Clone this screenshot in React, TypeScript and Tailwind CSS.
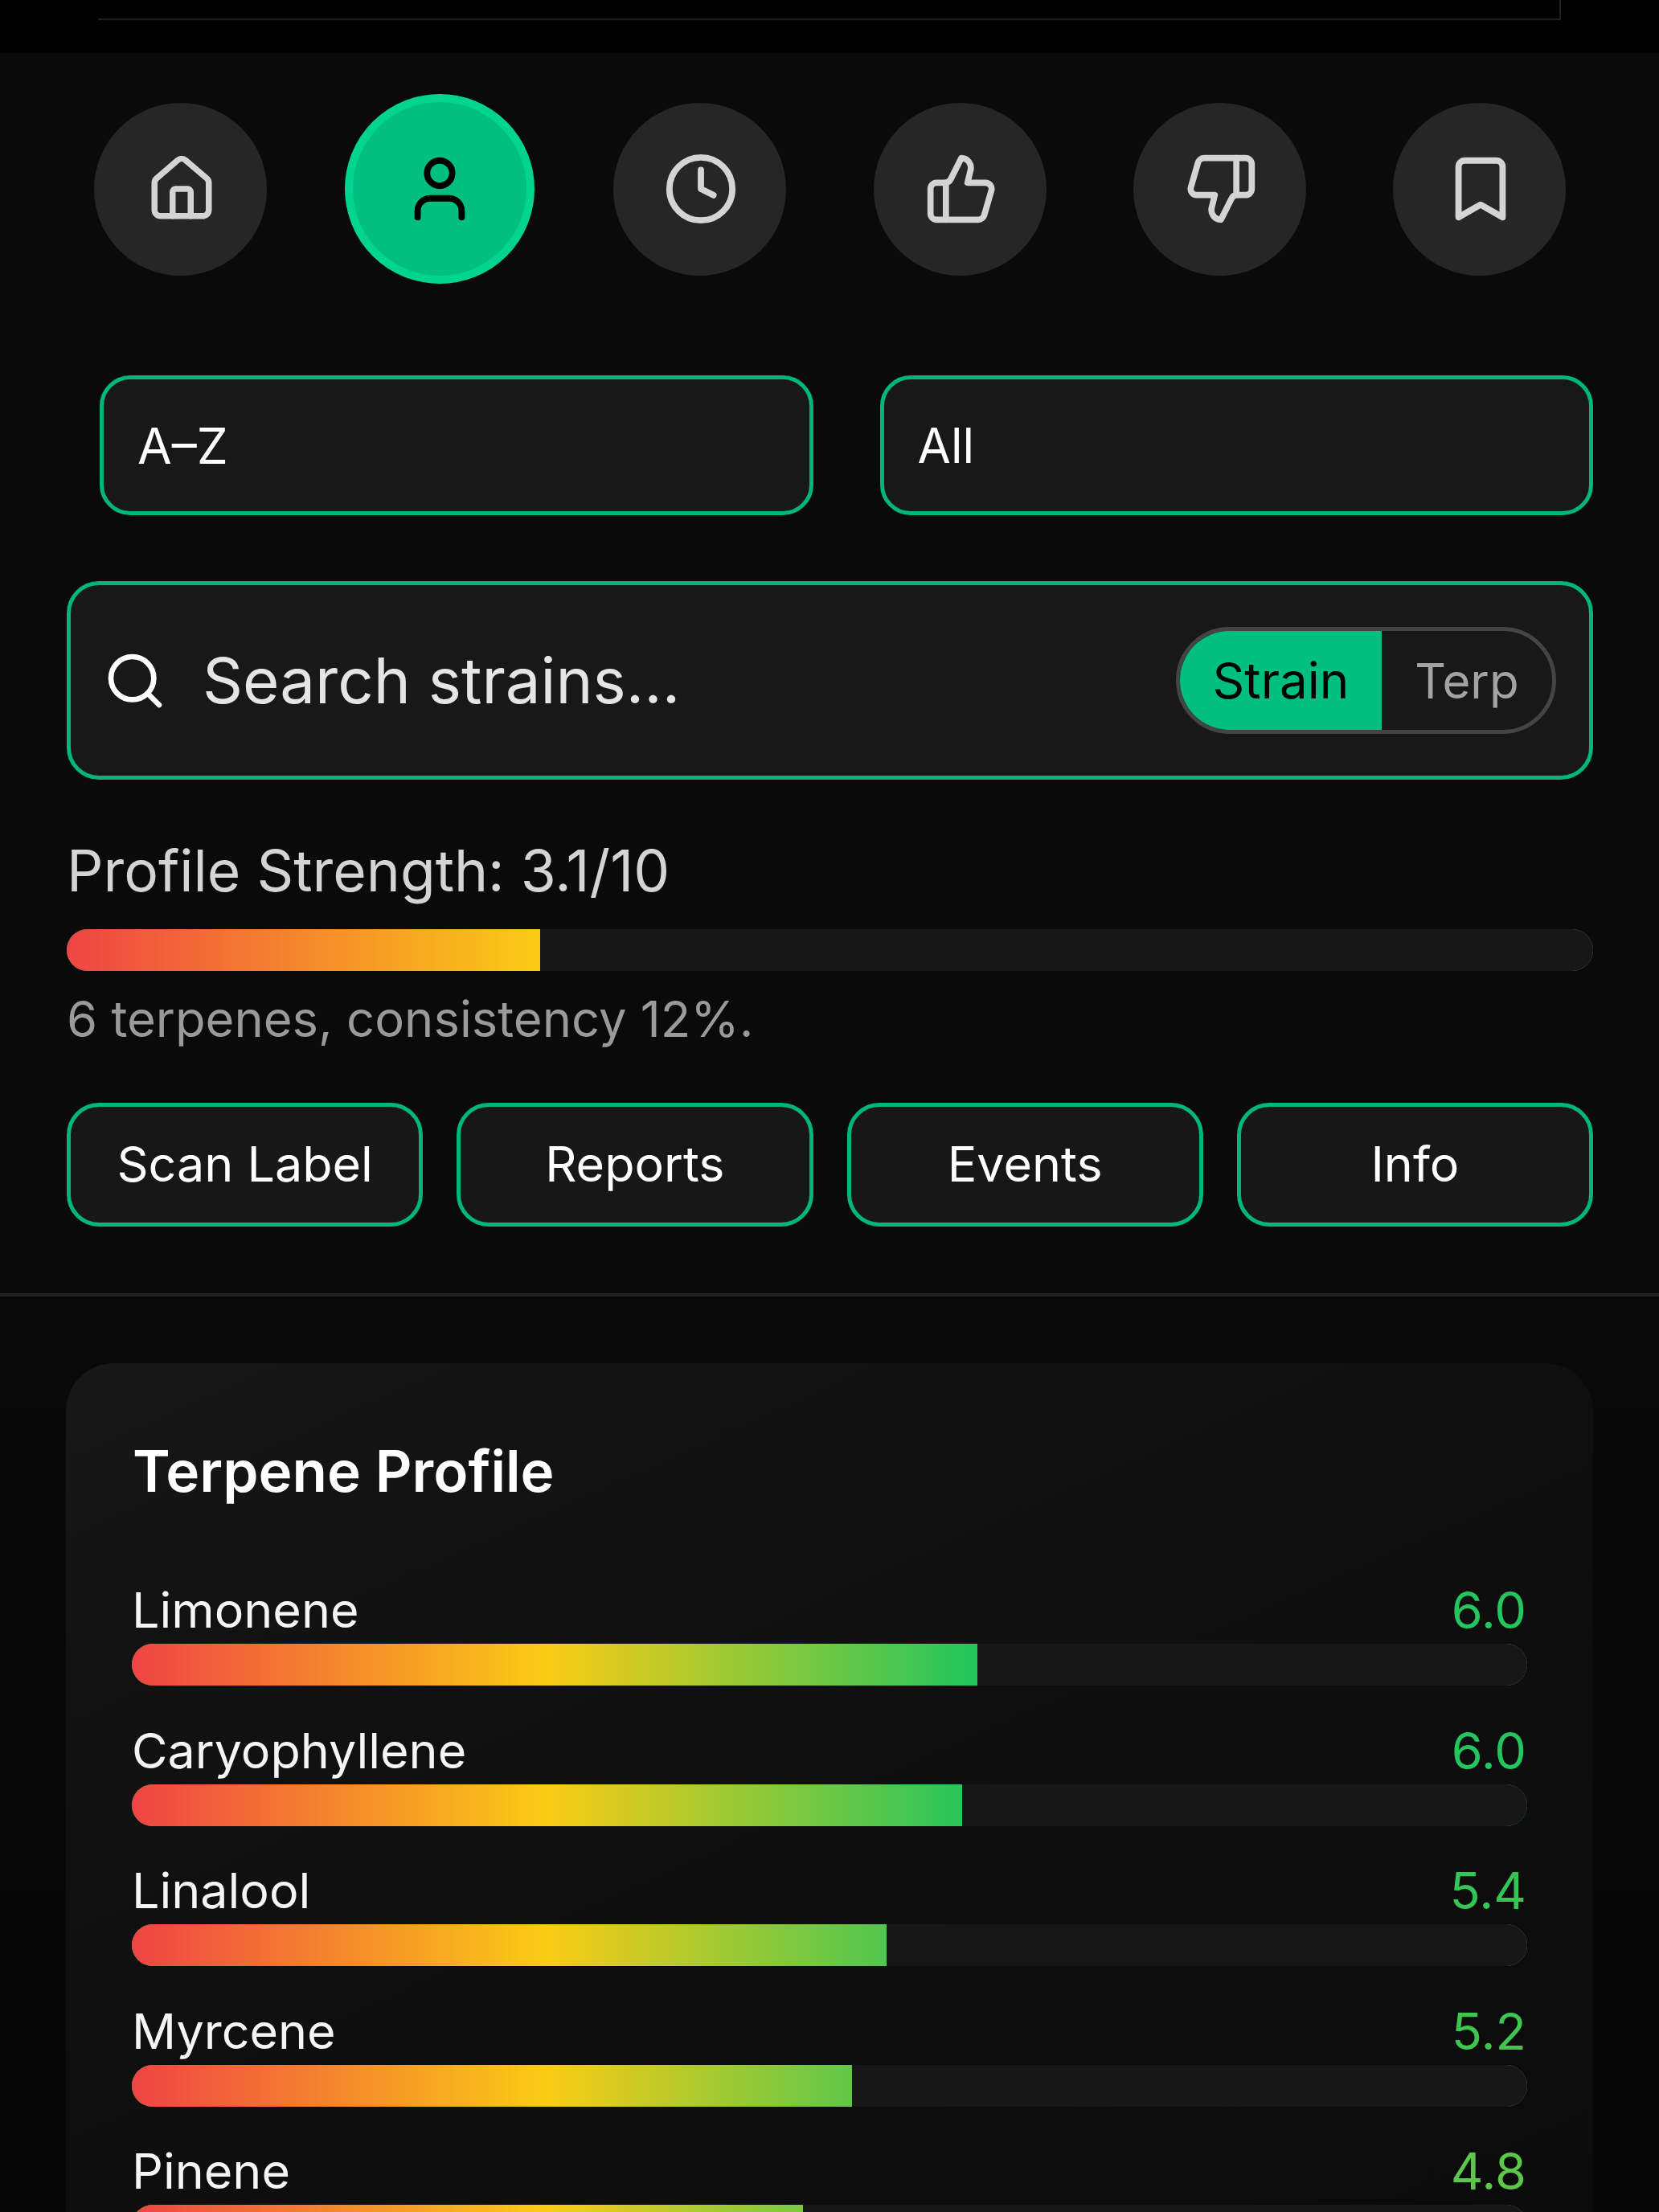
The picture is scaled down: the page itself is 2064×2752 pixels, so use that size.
import { Clock, House, Search, ThumbsDown, ThumbsUp, User } from "lucide-react";

const terpenes = [
  { name: "Limonene", score: "6.0", width: 60.6, color: "text-[#22c55e]" },
  { name: "Caryophyllene", score: "6.0", width: 59.5, color: "text-[#22c55e]" },
  { name: "Linalool", score: "5.4", width: 54.1, color: "text-[#33c655]" },
  { name: "Myrcene", score: "5.2", width: 51.6, color: "text-[#3fc651]" },
  { name: "Pinene", score: "4.8", width: 48.1, color: "text-[#5cc849]" },
];

const actions = ["Scan Label", "Reports", "Events", "Info"];

function BookmarkIcon() {
  return (
    <svg
      viewBox="0 0 24 24"
      fill="none"
      stroke="currentColor"
      strokeWidth="2"
      strokeLinecap="round"
      strokeLinejoin="round"
      className="w-[94px] h-[94px]"
    >
      <path d="m19 21-7-4-7 4V5a2 2 0 0 1 2-2h10a2 2 0 0 1 2 2v16z" />
    </svg>
  );
}

function NavButton({ children }: { children: React.ReactNode }) {
  return (
    <div className="flex items-center justify-center w-[215px] h-[215px] pl-[3px] rounded-full bg-[#262626] text-[#d4d4d4]">
      {children}
    </div>
  );
}

function TerpeneRow({ name, score, width, color }: (typeof terpenes)[number]) {
  return (
    <div className="flex flex-col">
      <div className="flex justify-between items-end h-[72px] pr-[1px] leading-[72px]">
        <span className="text-[61px] text-[#f5f5f5]">{name}</span>
        <span className={`text-[63px] ${color}`}>{score}</span>
      </div>
      <div className="flex h-[52px] mt-[6px] rounded-full bg-[#22c55e] overflow-hidden">
        <div
          className="h-full bg-[linear-gradient(90deg,#ef4444_0,#facc15_517px,#22c55e_1050px)]"
          style={{ width: `${width}%` }}
        />
        <div className="flex-1 bg-[#171717]" />
      </div>
    </div>
  );
}

export default function App() {
  return (
    <div className="w-[2064px] h-[2752px] overflow-hidden bg-[#0a0a0a] font-['Inter',sans-serif]">
      <div className="h-[66px] bg-black px-[122px]">
        <div className="h-[25px] border-b-2 border-r-2 border-[#1f1f1f] w-[1820px]" />
      </div>

      <div className="flex items-center gap-[108.4px] pl-[116.5px] pt-[51px]">
        <NavButton>
          <House size={90} strokeWidth={2} />
        </NavButton>
        <div className="flex items-center justify-center w-[236px] h-[236px] -mx-[10.5px] rounded-full bg-[#00bf7f] border-[10px] border-[#00d48f] text-black">
          <User size={94} strokeWidth={2} />
        </div>
        <NavButton>
          <Clock size={94} strokeWidth={2} />
        </NavButton>
        <NavButton>
          <ThumbsUp size={92} strokeWidth={2} />
        </NavButton>
        <NavButton>
          <ThumbsDown size={92} strokeWidth={2} />
        </NavButton>
        <NavButton>
          <BookmarkIcon />
        </NavButton>
      </div>

      <div className="flex gap-[83px] pl-[124px] pr-[82px] mt-[114px]">
        <div className="flex-1 h-[174px] flex items-center pl-[42px] rounded-[38px] border-[5px] border-[#00b67a] bg-[#181818] text-[62px] text-white">
          A–Z
        </div>
        <div className="flex-1 h-[174px] flex items-center pl-[42px] rounded-[38px] border-[5px] border-[#00b67a] bg-[#181818] text-[60px] text-white">
          All
        </div>
      </div>

      <div className="flex items-center h-[247px] ml-[83px] mr-[82px] mt-[82px] pl-[40px] pr-[41px] rounded-[40px] border-[5px] border-[#00b67a] bg-[#181818]">
        <Search size={80} strokeWidth={2} className="text-white" />
        <span className="ml-[44px] text-[78px] text-[#e5e5e5]">Search strains...</span>
        <div className="ml-auto flex w-[473px] h-[133px] rounded-full border-[5px] border-[#444444] overflow-hidden">
          <div className="flex items-center justify-center w-[251px] bg-[#00bf7f] text-[62px] text-black">Strain</div>
          <div className="flex items-center justify-center flex-1 text-[60px] text-[#a3a3a3]">Terp</div>
        </div>
      </div>

      <div className="pl-[83px] pr-[82px]">
        <div className="mt-[70px] h-[86px] leading-[86px] text-[71.3px] text-[#d4d4d4]">
          Profile Strength: 3.1/10
        </div>
        <div className="flex h-[52px] mt-[30px] rounded-full bg-[#22c55e] overflow-hidden">
          <div className="h-full w-[31%] bg-[linear-gradient(90deg,#ef4444,#facc15)]" />
          <div className="flex-1 bg-[#171717]" />
        </div>
        <div className="mt-[25px] h-[70px] leading-[70px] text-[61.5px] text-[#9a9a9a]">
          6 terpenes, consistency 12%.
        </div>
        <div className="grid grid-cols-4 gap-[42px] mt-[69px]">
          {actions.map((label) => (
            <div
              key={label}
              className="flex items-center justify-center h-[154px] rounded-[40px] border-[5px] border-[#00b67a] bg-[#171717] text-[61px] text-white"
            >
              {label}
            </div>
          ))}
        </div>
      </div>

      <div className="h-[4px] mt-[83px] bg-[#222222]" />

      <div className="h-[1200px] px-[82px] pt-[83px] bg-[linear-gradient(180deg,#090909,#060606)]">
        <div className="h-full rounded-t-[60px] bg-[linear-gradient(156deg,#181818_0%,#121212_20%,#0e0e0e_55%,#0b0b0b_100%)] px-[82px] pt-[91px]">
          <div className="text-[71px] leading-[86px] font-semibold text-white pl-[1px]">Terpene Profile</div>
          <div className="flex flex-col gap-[44.6px] mt-[94px]">
            {terpenes.map((t) => (
              <TerpeneRow key={t.name} {...t} />
            ))}
          </div>
        </div>
      </div>
    </div>
  );
}
